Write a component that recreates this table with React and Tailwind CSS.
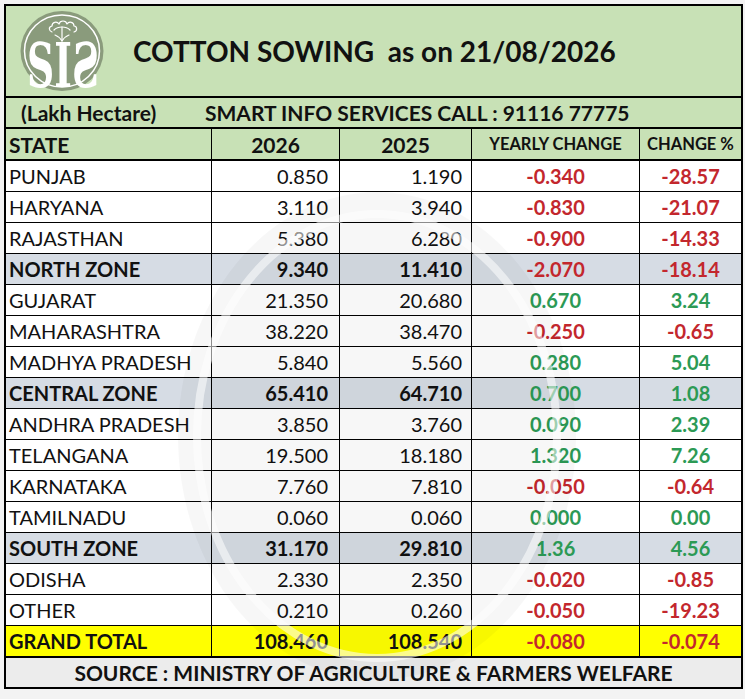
import React from "react";

const rows = [
  { s: "PUNJAB", a: "0.850", b: "1.190", c: "-0.340", d: "-28.57" },
  { s: "HARYANA", a: "3.110", b: "3.940", c: "-0.830", d: "-21.07" },
  { s: "RAJASTHAN", a: "5.380", b: "6.280", c: "-0.900", d: "-14.33" },
  { s: "NORTH ZONE", a: "9.340", b: "11.410", c: "-2.070", d: "-18.14", zone: true },
  { s: "GUJARAT", a: "21.350", b: "20.680", c: "0.670", d: "3.24" },
  { s: "MAHARASHTRA", a: "38.220", b: "38.470", c: "-0.250", d: "-0.65" },
  { s: "MADHYA PRADESH", a: "5.840", b: "5.560", c: "0.280", d: "5.04" },
  { s: "CENTRAL ZONE", a: "65.410", b: "64.710", c: "0.700", d: "1.08", zone: true },
  { s: "ANDHRA PRADESH", a: "3.850", b: "3.760", c: "0.090", d: "2.39" },
  { s: "TELANGANA", a: "19.500", b: "18.180", c: "1.320", d: "7.26" },
  { s: "KARNATAKA", a: "7.760", b: "7.810", c: "-0.050", d: "-0.64" },
  { s: "TAMILNADU", a: "0.060", b: "0.060", c: "0.000", d: "0.00" },
  { s: "SOUTH ZONE", a: "31.170", b: "29.810", c: "1.36", d: "4.56", zone: true },
  { s: "ODISHA", a: "2.330", b: "2.350", c: "-0.020", d: "-0.85" },
  { s: "OTHER", a: "0.210", b: "0.260", c: "-0.050", d: "-19.23" },
];

const grid = "grid grid-cols-[206px_128px_132px_168px_1fr]";

// SIS logo with the cotton boll on top (svg is taller than the badge so the letters' box fits)
const Logo = () => (
  <svg viewBox="0 0 84 110" className="w-[84px] h-[110px] -my-[9px] ml-[14px] shrink-0 overflow-visible">
    <ellipse cx="42" cy="55" rx="41.5" ry="40" fill="#8a9b7c" />
    <ellipse cx="42" cy="55" rx="37.5" ry="36" fill="none" stroke="#fff" strokeWidth="1.5" />
    <g fill="none" stroke="#fff" strokeWidth="1.2" strokeLinecap="round" strokeLinejoin="round" transform="translate(0 12)">
      <path d="M32 24c-3-1-4-5 0-6 0-4 5-5 7-2 1-4 7-4 8 0 2-3 7-2 7 2 3 0 4 5 0 6" />
      <path d="M34 22c2-2 5-3 8-3s6 1 8 3" />
      <path d="M42 19v14" />
      <path d="M35 27c3 1 5 3 7 6 2-3 4-5 7-6" />
    </g>
    <text
      x="7"
      y="91"
      fill="#fff"
      fontSize="62"
      fontWeight="700"
      fontFamily="'DejaVu Serif', 'Liberation Serif', serif"
      textLength="72"
      lengthAdjust="spacingAndGlyphs"
    >
      SIƧ
    </text>
  </svg>
);

// faint ring of the logo behind the figures
const Watermark = () => (
  <svg viewBox="0 0 400 490" className="absolute left-[171px] top-[30px] w-[400px] h-[490px] pointer-events-none">
    <ellipse cx="200" cy="245" rx="199" ry="244" fill="rgba(0,0,0,0.03)" />
    <ellipse cx="200" cy="245" rx="180" ry="222" fill="none" stroke="rgba(255,255,255,0.55)" strokeWidth="8" />
  </svg>
);

const tone = (v) => (v.startsWith("-") ? "text-[#c3272d]" : "text-[#2c9a55]");

const Row = ({ r }) => (
  <div className={`${grid} h-[31px] border-b border-black ${r.zone ? "bg-[#d6dce4] font-bold" : ""}`}>
    <div className="border-r border-black pl-[3px] flex items-center">{r.s}</div>
    <div className="border-r border-black pr-[11px] flex items-center justify-end">{r.a}</div>
    <div className="border-r border-black pr-[9px] flex items-center justify-end">{r.b}</div>
    <div className={`border-r border-black flex items-center justify-center font-bold ${tone(r.c)}`}>{r.c}</div>
    <div className={`flex items-center justify-center font-bold ${tone(r.d)}`}>{r.d}</div>
  </div>
);

export default function App() {
  return (
    <div
      className="min-h-screen bg-[#f3f3f3] pt-[4px] pl-[4px] text-[#111]"
      style={{ fontFamily: "Lato, 'Liberation Sans', sans-serif" }}
    >
      <div className="w-[739px] border-2 border-black bg-white">
        <div className="h-[92px] bg-[#c8e1b6] border-b-2 border-black flex items-center">
          <Logo />
          <div className="ml-[29px] text-[28px] font-bold whitespace-pre">COTTON SOWING  as on 21/08/2026</div>
        </div>
        <div className="h-[31px] bg-[#c8e1b6] border-b-2 border-black flex items-center text-[21px] font-bold">
          <span className="ml-[15px] w-[184px]">(Lakh Hectare)</span>
          <span>SMART INFO SERVICES CALL : 91116 77775</span>
        </div>
        <div className={`${grid} h-[32px] bg-[#c8e1b6] border-b-2 border-black font-bold text-[21px]`}>
          <div className="border-r border-black pl-[3px] flex items-center">STATE</div>
          <div className="border-r border-black flex items-center justify-center">2026</div>
          <div className="border-r border-black flex items-center justify-center">2025</div>
          <div className="border-r border-black flex items-center justify-center text-[16.5px]">YEARLY CHANGE</div>
          <div className="flex items-center justify-center text-[16.5px]">CHANGE %</div>
        </div>
        <div className="relative text-[20px]">
          {rows.map((r) => (
            <Row key={r.s} r={r} />
          ))}
          <div className={`${grid} h-[32px] border-b-2 border-black bg-[#ffff00] font-bold`}>
            <div className="border-r border-black pl-[3px] flex items-center">GRAND TOTAL</div>
            <div className="border-r border-black pr-[11px] flex items-center justify-end">108.460</div>
            <div className="border-r border-black pr-[9px] flex items-center justify-end">108.540</div>
            <div className="border-r border-black flex items-center justify-center text-[#c3272d]">-0.080</div>
            <div className="flex items-center justify-center text-[#c3272d]">-0.074</div>
          </div>
          <div className="h-[29px] bg-[#ececec] flex items-center justify-center font-bold text-[21px]">
            SOURCE : MINISTRY OF AGRICULTURE &amp; FARMERS WELFARE
          </div>
          <Watermark />
        </div>
      </div>
    </div>
  );
}
